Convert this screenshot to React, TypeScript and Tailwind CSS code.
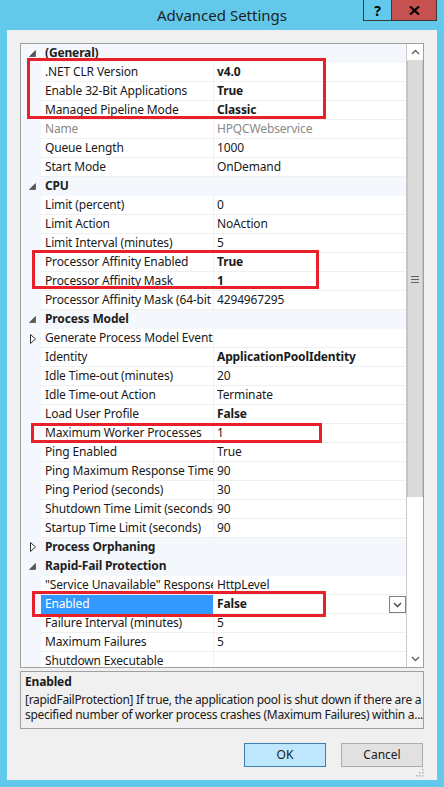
import React from 'react';

type Row =
  | { kind: 'cat'; label: string; open: boolean }
  | {
      kind: 'prop';
      name: string;
      value?: string;
      bold?: boolean;
      dim?: boolean;
      selected?: boolean;
      expandable?: boolean;
    };

const rows: Row[] = [
  { kind: 'cat', label: '(General)', open: true },
  { kind: 'prop', name: '.NET CLR Version', value: 'v4.0', bold: true },
  { kind: 'prop', name: 'Enable 32-Bit Applications', value: 'True', bold: true },
  { kind: 'prop', name: 'Managed Pipeline Mode', value: 'Classic', bold: true },
  { kind: 'prop', name: 'Name', value: 'HPQCWebservice', dim: true },
  { kind: 'prop', name: 'Queue Length', value: '1000' },
  { kind: 'prop', name: 'Start Mode', value: 'OnDemand' },
  { kind: 'cat', label: 'CPU', open: true },
  { kind: 'prop', name: 'Limit (percent)', value: '0' },
  { kind: 'prop', name: 'Limit Action', value: 'NoAction' },
  { kind: 'prop', name: 'Limit Interval (minutes)', value: '5' },
  { kind: 'prop', name: 'Processor Affinity Enabled', value: 'True', bold: true },
  { kind: 'prop', name: 'Processor Affinity Mask', value: '1', bold: true },
  { kind: 'prop', name: 'Processor Affinity Mask (64-bit option)', value: '4294967295' },
  { kind: 'cat', label: 'Process Model', open: true },
  { kind: 'prop', name: 'Generate Process Model Event Log Entry', expandable: true },
  { kind: 'prop', name: 'Identity', value: 'ApplicationPoolIdentity', bold: true },
  { kind: 'prop', name: 'Idle Time-out (minutes)', value: '20' },
  { kind: 'prop', name: 'Idle Time-out Action', value: 'Terminate' },
  { kind: 'prop', name: 'Load User Profile', value: 'False', bold: true },
  { kind: 'prop', name: 'Maximum Worker Processes', value: '1' },
  { kind: 'prop', name: 'Ping Enabled', value: 'True' },
  { kind: 'prop', name: 'Ping Maximum Response Time (seconds)', value: '90' },
  { kind: 'prop', name: 'Ping Period (seconds)', value: '30' },
  { kind: 'prop', name: 'Shutdown Time Limit (seconds)', value: '90' },
  { kind: 'prop', name: 'Startup Time Limit (seconds)', value: '90' },
  { kind: 'cat', label: 'Process Orphaning', open: false },
  { kind: 'cat', label: 'Rapid-Fail Protection', open: true },
  { kind: 'prop', name: '"Service Unavailable" Response Type', value: 'HttpLevel' },
  { kind: 'prop', name: 'Enabled', value: 'False', bold: true, selected: true },
  { kind: 'prop', name: 'Failure Interval (minutes)', value: '5' },
  { kind: 'prop', name: 'Maximum Failures', value: '5' },
  { kind: 'prop', name: 'Shutdown Executable', value: '' },
];

function Glyph({ open }: { open: boolean }) {
  return open ? (
    <svg width="7" height="7" viewBox="0 0 7 7" className="ml-[8px]">
      <polygon points="6.5,0.5 6.5,6.5 0.5,6.5" fill="#595959" stroke="#3c3c3c" strokeWidth="0.6" />
    </svg>
  ) : (
    <svg width="6" height="10" viewBox="0 0 6 10" className="ml-[9px]">
      <polygon points="0.5,0.5 5.5,5 0.5,9.5" fill="white" stroke="#333" strokeWidth="1" />
    </svg>
  );
}

function GridRow({ row }: { row: Row }) {
  if (row.kind === 'cat') {
    return (
      <div className="flex h-[19px] items-center bg-[#f4f7fc] border-b border-[#f4f7fc]">
        <div className="w-[20px] shrink-0 flex items-center">
          <Glyph open={row.open} />
        </div>
        <span className="pl-[4px] font-bold text-[#1e1e1e]">{row.label}</span>
      </div>
    );
  }
  return (
    <div className="flex h-[19px]">
      <div className="w-[20px] shrink-0 flex items-center bg-[#f4f7fc]">
        {row.expandable && <Glyph open={false} />}
      </div>
      <div
        className={`w-[172px] shrink-0 overflow-hidden whitespace-nowrap pl-[4px] leading-[18px] border-b ${
          row.selected ? 'bg-[#3399ff] text-white border-[#3399ff]' : 'bg-white border-[#f0f0f0]'
        } ${row.dim ? 'text-[#8a8a8a]' : row.selected ? '' : 'text-[#1a1a1a]'}`}
      >
        {row.name}
      </div>
      <div className="w-[1px] shrink-0 bg-[#f0f0f0]" />
      <div
        className={`flex-1 flex items-start overflow-hidden whitespace-nowrap pl-[3px] leading-[18px] bg-white border-b border-[#f0f0f0] ${
          row.bold ? 'font-bold' : ''
        } ${row.dim ? 'text-[#8a8a8a]' : 'text-[#1a1a1a]'}`}
      >
        <span className="flex-1">{row.value}</span>
        {row.selected && (
          <div className="w-[17px] h-[17px] mt-[1px] border border-[#808080] bg-white flex items-center justify-center">
            <svg width="9" height="6" viewBox="0 0 9 6">
              <path d="M1 1 L4.5 4.5 L8 1" fill="none" stroke="#555" strokeWidth="1.6" />
            </svg>
          </div>
        )}
      </div>
    </div>
  );
}

function RedBox({ className }: { className: string }) {
  return <div className={`absolute border-[3px] border-[#e8202a] pointer-events-none ${className}`} />;
}

export default function App() {
  return (
    <div
      className="relative w-[444px] h-[787px] bg-[#62c9eb] overflow-hidden text-[12px]"
      style={{ fontFamily: '"Segoe UI", "Noto Sans", sans-serif' }}
    >
      {/* Title bar */}
      <div className="relative h-[30px] flex items-center justify-center">
        <span className="text-[15px] text-[#1e1e1e] mt-[1px]">Advanced Settings</span>
        <div className="absolute top-0 right-[7px] flex h-[21px]">
          <div className="w-[29px] border border-t-0 border-[#3a3a3a] flex items-center justify-center font-bold text-[14px] text-black">
            ?
          </div>
          <div className="w-[45px] border border-t-0 border-l-0 border-[#3a3a3a] bg-[#c75050] flex items-center justify-center">
            <svg width="11" height="9" viewBox="0 0 11 9">
              <path d="M1 0.5 L10 8.5 M10 0.5 L1 8.5" stroke="black" strokeWidth="2.2" />
            </svg>
          </div>
        </div>
      </div>

      {/* Client area */}
      <div className="mx-[7px] h-[750px] bg-[#f0f0f0] px-[13px] pt-[13px] flex flex-col">
        {/* Property grid */}
        <div className="h-[625px] border border-[#a0a0a0] bg-white flex overflow-hidden tracking-[-0.15px]">
          <div className="w-[385px] overflow-hidden">
            {rows.map((r, i) => (
              <GridRow key={i} row={r} />
            ))}
          </div>
          {/* Scrollbar */}
          <div className="flex-1 border-l border-[#c8c8c8] bg-white flex flex-col">
            <div className="h-[17px] border-b border-[#dcdcdc] flex items-center justify-center">
              <svg width="9" height="6" viewBox="0 0 9 6">
                <path d="M1 5 L4.5 1.5 L8 5" fill="none" stroke="#606060" strokeWidth="1.4" />
              </svg>
            </div>
            <div className="h-[436px] bg-[#dadada] border-x border-[#c4c4c4] flex items-center justify-center">
              <div className="flex flex-col gap-[2px]">
                <div className="w-[8px] h-[1px] bg-[#606060]" />
                <div className="w-[8px] h-[1px] bg-[#606060]" />
                <div className="w-[8px] h-[1px] bg-[#606060]" />
              </div>
            </div>
            <div className="flex-1" />
            <div className="h-[17px] flex items-center justify-center">
              <svg width="9" height="6" viewBox="0 0 9 6">
                <path d="M1 1 L4.5 4.5 L8 1" fill="none" stroke="#606060" strokeWidth="1.4" />
              </svg>
            </div>
          </div>
        </div>

        {/* Description pane */}
        <div className="mt-[3px] h-[58px] border border-[#a0a0a0] px-[4px] pt-[2px] text-[#1a1a1a] whitespace-nowrap overflow-hidden">
          <div className="font-bold leading-[16px] tracking-[-0.15px]">Enabled</div>
          <div className="leading-[15px] mt-[2px] tracking-[-0.3px]">
            [rapidFailProtection] If true, the application pool is shut down if there are a
          </div>
          <div className="leading-[15px] tracking-[-0.3px]">
            specified number of worker process crashes (Maximum Failures) within a...
          </div>
        </div>

        {/* Buttons */}
        <div className="mt-[14px] flex justify-end gap-[15px] pr-[1px]">
          <button className="w-[82px] h-[24px] border border-[#3c7fb1] bg-[#bee6fd] text-[#1a1a1a] text-[12px]">
            OK
          </button>
          <button className="w-[82px] h-[24px] border border-[#adadad] bg-[#e1e1e1] text-[#1a1a1a] text-[12px]">
            Cancel
          </button>
        </div>
        <div className="flex-1 flex items-end justify-end pb-[3px]">
          <svg width="8" height="8" viewBox="0 0 8 8">
            <g fill="#b0b0b0">
              <rect x="6" y="0" width="1.5" height="1.5" />
              <rect x="3" y="3" width="1.5" height="1.5" />
              <rect x="6" y="3" width="1.5" height="1.5" />
              <rect x="0" y="6" width="1.5" height="1.5" />
              <rect x="3" y="6" width="1.5" height="1.5" />
              <rect x="6" y="6" width="1.5" height="1.5" />
            </g>
          </svg>
        </div>
      </div>

      {/* Annotation boxes */}
      <RedBox className="left-[27px] top-[58px] w-[299px] h-[61px]" />
      <RedBox className="left-[32px] top-[250px] w-[287px] h-[39px]" />
      <RedBox className="left-[31px] top-[423px] w-[291px] h-[20px]" />
      <RedBox className="left-[32px] top-[591px] w-[294px] h-[26px]" />
    </div>
  );
}
